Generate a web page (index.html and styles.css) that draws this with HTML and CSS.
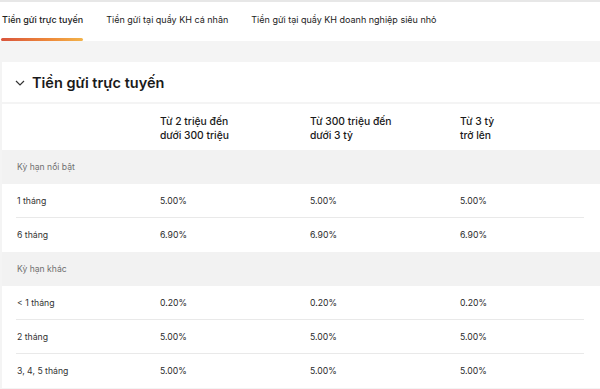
FILE: index.html
```html
<!DOCTYPE html>
<html lang="vi">
<head>
<meta charset="utf-8">
<title>Lãi suất tiền gửi</title>
<link rel="stylesheet" href="styles.css">
</head>
<body>
<nav class="tabs">
  <div class="tab active">Tiền gửi trực tuyến</div>
  <div class="tab">Tiền gửi tại quầy KH cá nhân</div>
  <div class="tab">Tiền gửi tại quầy KH doanh nghiệp siêu nhỏ</div>
</nav>
<section class="panel">
  <header class="panel-head">
    <svg class="chev" width="10" height="6" viewBox="0 0 10 6"><polyline points="1,1 5,5 9,1" fill="none" stroke="#333" stroke-width="1.2"/></svg>
    <h2>Tiền gửi trực tuyến</h2>
  </header>
  <div class="rates">
    <div class="row head">
      <div class="cell"></div>
      <div class="cell">Từ 2 triệu đến<br>dưới 300 triệu</div>
      <div class="cell">Từ 300 triệu đến<br>dưới 3 tỷ</div>
      <div class="cell">Từ 3 tỷ<br>trở lên</div>
    </div>
    <div class="group">Kỳ hạn nổi bật</div>
    <div class="row data sep"><div class="cell label">1 tháng</div><div class="cell">5.00%</div><div class="cell">5.00%</div><div class="cell">5.00%</div></div>
    <div class="row data"><div class="cell label">6 tháng</div><div class="cell">6.90%</div><div class="cell">6.90%</div><div class="cell">6.90%</div></div>
    <div class="group">Kỳ hạn khác</div>
    <div class="row data sep"><div class="cell label">&lt; 1 tháng</div><div class="cell">0.20%</div><div class="cell">0.20%</div><div class="cell">0.20%</div></div>
    <div class="row data sep"><div class="cell label">2 tháng</div><div class="cell">5.00%</div><div class="cell">5.00%</div><div class="cell">5.00%</div></div>
    <div class="row data"><div class="cell label">3, 4, 5 tháng</div><div class="cell">5.00%</div><div class="cell">5.00%</div><div class="cell">5.00%</div></div>
  </div>
</section>
</body>
</html>
```
FILE: styles.css
```css
* { box-sizing: border-box; margin: 0; padding: 0; }
body {
  margin: 0;
  background: #f4f4f4;
  font-family: Inter, "Noto Sans", sans-serif;
  color: #222;
  overflow: hidden;
}
.tabs {
  display: flex;
  gap: 23px;
  height: 41px;
  background: #fff;
  border-top: 2px solid #e7e7e7;
  padding-left: 2px;
}
.tab {
  position: relative;
  font-size: 9px;
  line-height: 35px;
  color: #222;
  white-space: nowrap;
}
.tab.active { font-weight: 500; }
.tab.active::after {
  content: "";
  position: absolute;
  left: -1px;
  right: 0;
  bottom: 0;
  height: 3px;
  border-radius: 2px;
  background: linear-gradient(90deg, #d9553c, #ee8a3a 60%, #f2b34a);
}
.panel {
  margin: 21px 0 0 2px;
}
.panel-head {
  display: flex;
  align-items: center;
  height: 40px;
  background: #fff;
  padding-left: 13px;
  margin-bottom: 2px;
}
.chev { margin-right: 7px; margin-top: 1px; }
.panel-head h2 {
  font-size: 14.5px;
  font-weight: 600;
  color: #1a1a1a;
}
.rates { background: #fff; }
.row {
  display: grid;
  grid-template-columns: 158px 150px 150px 1fr;
}
.row.head {
  height: 46px;
  padding-top: 10px;
  font-size: 10.3px;
  font-weight: 500;
  line-height: 14px;
  color: #1a1a1a;
}
.group {
  height: 34px;
  background: #f2f2f2;
  padding-left: 15px;
  font-size: 8.6px;
  line-height: 34px;
  color: #6f6f6f;
}
.row.data {
  height: 34px;
  align-items: center;
  font-size: 8.7px;
  color: #2a2a2a;
}
.row.data.sep {
  background-image: linear-gradient(#e9e9e9, #e9e9e9);
  background-repeat: no-repeat;
  background-size: 568px 1px;
  background-position: 14px 100%;
}
.cell.label { padding-left: 15px; color: #333; }
```
